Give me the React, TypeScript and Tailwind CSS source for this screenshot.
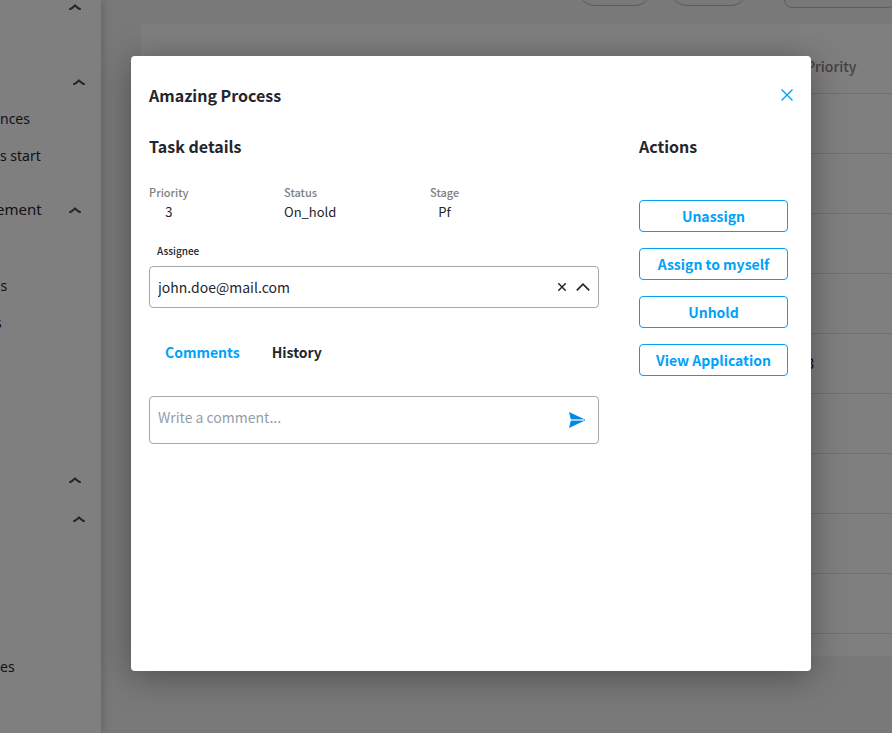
import type { ReactNode } from "react";

function NavChevron() {
  return (
    <svg viewBox="0 0 12 6" className="h-[6px] w-3" fill="none" stroke="#4a4a4a" strokeWidth="2">
      <path d="M1 5.2Q3 4.2 6 1.4Q9 4.2 11 5.2" strokeLinecap="round" />
    </svg>
  );
}

type NavRowProps = { label?: string; className?: string; chevron?: "outer" | "inner"; large?: boolean };

function NavRow({ label, className = "", chevron, large }: NavRowProps) {
  return (
    <li className={`flex h-[37px] items-center justify-between ${chevron === "outer" ? "pr-4" : "pr-5"} ${className}`}>
      <span className={`whitespace-nowrap ${large ? "text-[15px]" : "text-sm"}`}>{label}</span>
      {chevron && (
        <button type="button" aria-label="Collapse section">
          <NavChevron />
        </button>
      )}
    </li>
  );
}

function Sidebar() {
  return (
    <nav className="relative z-10 w-[101px] shrink-0 bg-white shadow-[0_0_10px_rgba(0,0,0,0.25)]">
      <ul className="-mt-3 font-['Noto_Sans',sans-serif]">
        <NavRow chevron="inner" />
        <NavRow chevron="outer" className="mt-[38px]" />
        <NavRow label="nces" />
        <NavRow label="s start" />
        <NavRow label="ement" large chevron="inner" className="mt-[17px] -ml-1" />
        <NavRow label="gs" className="mt-[39px] -ml-2" />
        <NavRow label="s" className="-ml-[5px]" />
        <NavRow chevron="inner" className="mt-[120px]" />
        <NavRow chevron="outer" className="mt-[2px]" />
        <NavRow label="es" className="mt-[111px]" />
      </ul>
    </nav>
  );
}

const rows = ["", "", "", "", "3", "", "", "", ""];

function TaskTable() {
  return (
    <main className="min-w-0 flex-1 overflow-hidden pl-10">
      <div className="-mt-7 flex justify-end">
        <button type="button" aria-label="Filter" className="h-[34px] w-[74px] rounded-full border border-[#b8b8b8]" />
        <button type="button" aria-label="Sort" className="ml-[18px] h-[34px] w-[78px] rounded-full border border-[#b8b8b8]" />
        <input aria-label="Search" className="-mr-1 ml-9 h-9 w-28 rounded-lg border border-[#b8b8b8]" />
      </div>
      <div className="mt-4 rounded-l bg-white pb-[22px]">
        <table className="w-full table-fixed border-collapse">
          <thead>
            <tr className="h-[69px] border-b border-[#e0e0e0]">
              <th />
              <th className="w-[86px] pt-4 text-left text-sm font-medium text-[#858585]">Priority</th>
            </tr>
          </thead>
          <tbody>
            {rows.map((value, index) => (
              <tr key={index} className="h-[60px] border-b border-[#e0e0e0] text-[15px]">
                <td />
                <td>{value}</td>
              </tr>
            ))}
          </tbody>
        </table>
      </div>
    </main>
  );
}

function Detail({ term, children }: { term: string; children: ReactNode }) {
  return (
    <div className="w-fit text-center">
      <dt className="text-left text-[11px] leading-4 font-medium text-[#808080]">{term}</dt>
      <dd className="mt-1 text-[13px] leading-4">{children}</dd>
    </div>
  );
}

const actions = ["Unassign", "Assign to myself", "Unhold", "View Application"];

function TaskDialog() {
  return (
    <div className="absolute inset-0 z-20 flex items-start justify-center bg-black/50 pt-14 pl-[50px]">
      <section
        role="dialog"
        aria-modal="true"
        aria-labelledby="dialog-title"
        className="min-h-[615px] w-[680px] rounded bg-white pt-[27px] pr-[23px] pl-[18px] shadow-[0_5px_35px_rgba(0,0,0,0.36)]"
      >
        <header className="flex h-6 items-center justify-between">
          <h1 id="dialog-title" className="text-base font-bold">Amazing Process</h1>
          <button type="button" aria-label="Close" className="-mr-[10px] p-[5px]">
            <svg viewBox="0 0 12 12" className="size-3" fill="none" stroke="#00a2f8" strokeWidth="1.4">
              <path d="M.5.5l11 11M11.5.5l-11 11" />
            </svg>
          </button>
        </header>
        <div className="mt-[27px] flex gap-10">
          <div className="flex-1">
            <h2 className="text-base leading-6 font-bold">Task details</h2>
            <dl className="mt-[26px] flex">
              <div className="w-[135px]"><Detail term="Priority">3</Detail></div>
              <div className="w-[146px]"><Detail term="Status">On_hold</Detail></div>
              <div><Detail term="Stage">Pf</Detail></div>
            </dl>
            <label htmlFor="assignee" className="mt-[23px] block pl-2 text-[10px] leading-4 font-medium">Assignee</label>
            <div className="mt-[7px] flex h-[42px] items-center rounded border border-[#a6a8aa] pr-2">
              <input id="assignee" defaultValue="john.doe@mail.com" className="min-w-0 flex-1 pl-2 text-sm outline-none" />
              <button type="button" aria-label="Clear assignee" className="mr-[2px] p-2">
                <svg viewBox="0 0 8 8" className="size-2" fill="none" stroke="#24262c" strokeWidth="1.5">
                  <path d="M.2.2l7.6 7.6M7.8.2L.2 7.8" />
                </svg>
              </button>
              <button type="button" aria-label="Close list" className="py-2">
                <svg viewBox="0 0 14 8" className="h-2 w-[14px]" fill="none" stroke="#24262c" strokeWidth="1.7">
                  <path d="M.8 7.4L7 1.2l6.2 6.2" />
                </svg>
              </button>
            </div>
            <div role="tablist" className="mt-8 flex gap-8 pl-4 text-sm leading-6 font-semibold">
              <button type="button" role="tab" aria-selected="true" className="text-[#00a2f8]">Comments</button>
              <button type="button" role="tab" aria-selected="false">History</button>
            </div>
            <div className="mt-8 flex h-12 items-center rounded border border-[#a6a8aa] pr-[13px]">
              <textarea aria-label="Comment" rows={1} placeholder="Write a comment..." className="h-[30px] min-w-0 flex-1 resize-none pl-2 text-sm leading-6 outline-none placeholder:text-[#939dab]" />
              <button type="button" aria-label="Send comment">
                <svg viewBox="0 0 16 16" className="size-4">
                  <path d="M0 0L16 7.4V8.6L0 16L2 8Z" fill="#0288e0" />
                  <path d="M2 7.2H15.2V8.8H2Z" fill="#c5e5fa" />
                </svg>
              </button>
            </div>
          </div>
          <aside className="w-[149px]">
            <h2 className="text-base leading-6 font-bold">Actions</h2>
            <div className="mt-[42px] flex flex-col gap-4">
              {actions.map((action) => (
                <button key={action} type="button" className="h-8 rounded border border-[#00a2f8] text-sm leading-6 font-semibold text-[#00a2f8]">
                  {action}
                </button>
              ))}
            </div>
          </aside>
        </div>
      </section>
    </div>
  );
}

export default function App() {
  return (
    <div className="relative flex min-h-screen overflow-hidden bg-[#f2f2f2] font-['Noto_Sans_CJK_JP',sans-serif] text-[#24262c]">
      <Sidebar />
      <TaskTable />
      <TaskDialog />
    </div>
  );
}
